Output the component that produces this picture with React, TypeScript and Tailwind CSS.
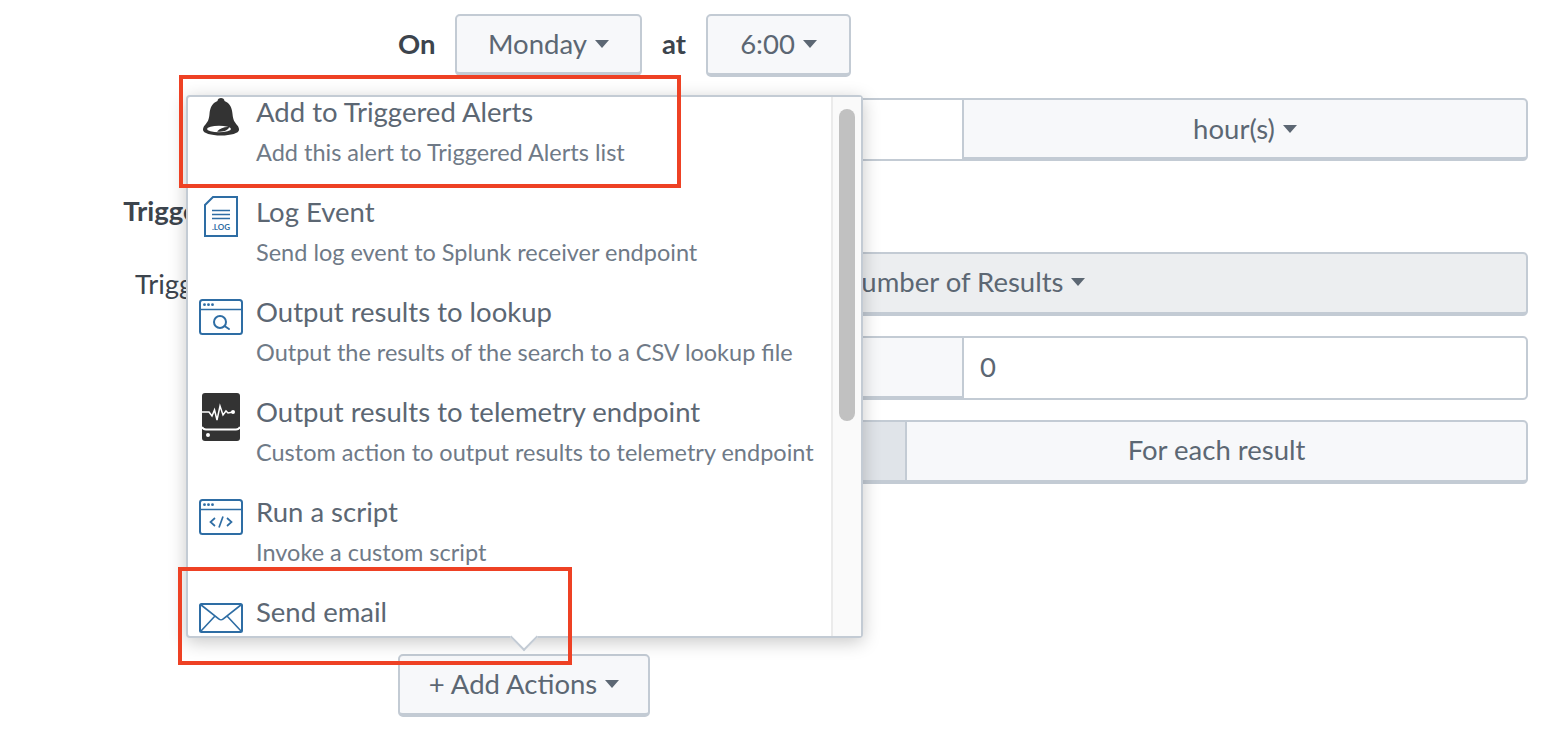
import type { ReactNode } from 'react';

const BLUE = '#2e6da4';
const DARK = '#333333';

function Caret() {
  return <span className="ml-2 inline-block h-0 w-0 border-x-[7px] border-t-[8px] border-x-transparent border-t-[#5c6773] align-[3px]" />;
}

function BellIcon() {
  return (
    <svg width="46" height="50" viewBox="0 0 46 50" className="shrink-0">
      <path d="M19.5 9 C19.5 5 26.5 5 26.5 9 C32 11 34 16 34.5 22 C35 28 36.5 30 39 33 C41 35 41 37 41 38 C41 41 33 43.5 23 43.5 C13 43.5 5 41 5 38 C5 37 5 35 7 33 C9.5 30 11 28 11.5 22 C12 16 14 11 19.5 9 Z" fill={DARK} />
      <ellipse cx="21" cy="37" rx="12" ry="3.2" fill="#ffffff" />
      <path d="M19 39.5 C22 36 27 34.5 31 35 C31 38 25 40.5 19 39.5 Z" fill={DARK} />
    </svg>
  );
}

function LogIcon() {
  return (
    <svg width="46" height="50" viewBox="0 0 46 50" className="shrink-0">
      <path d="M15 5 H39 V44 H7 V13 Z" fill="none" stroke={BLUE} strokeWidth="2" />
      <path d="M14 18.5 H32 M14 22.5 H32 M14 26.5 H32" stroke={BLUE} strokeWidth="1.6" />
      <text x="23" y="38" textAnchor="middle" fontSize="8" fontWeight="700" fill={BLUE} fontFamily="Lato, sans-serif">.LOG</text>
    </svg>
  );
}

function WindowFrame({ children }: { children: ReactNode }) {
  return (
    <svg width="46" height="50" viewBox="0 0 46 50" className="shrink-0">
      <rect x="2" y="8" width="42" height="34" rx="2.5" fill="none" stroke={BLUE} strokeWidth="2" />
      <path d="M2 17.5 H44" stroke={BLUE} strokeWidth="1.5" />
      <circle cx="6.5" cy="12.7" r="1.4" fill={BLUE} />
      <circle cx="10.5" cy="12.7" r="1.4" fill={BLUE} />
      <circle cx="14.5" cy="12.7" r="1.4" fill={BLUE} />
      {children}
    </svg>
  );
}

function TelemetryIcon() {
  return (
    <svg width="46" height="50" viewBox="0 0 46 50" className="shrink-0">
      <rect x="4" y="1" width="38" height="48" rx="3" fill={DARK} />
      <path d="M4 20 H11 L14 24 L16.5 18 L19 28 L22 14 L25 23 L28 19 L30 21 L35 20" fill="none" stroke="#ffffff" strokeWidth="1.5" />
      <circle cx="35" cy="20" r="2" fill="#ffffff" />
      <path d="M4 35 C5 37 6 37.5 8 37.5 H38 C40 37.5 41 37 42 35" fill="none" stroke="#ffffff" strokeWidth="2" />
      <circle cx="10" cy="43" r="2" fill="#ffffff" />
    </svg>
  );
}

function EmailIcon() {
  return (
    <svg width="46" height="50" viewBox="0 0 46 50" className="shrink-0">
      <rect x="2" y="12" width="42" height="28" rx="1.5" fill="none" stroke={BLUE} strokeWidth="2" />
      <path d="M2.5 12.5 L21 27 C22 28 24 28 25 27 L43.5 12.5 M3 39 L17 24 M43 39 L29 24" fill="none" stroke={BLUE} strokeWidth="1.6" />
    </svg>
  );
}

const actions = [
  { icon: <BellIcon />, title: 'Add to Triggered Alerts', desc: 'Add this alert to Triggered Alerts list' },
  { icon: <LogIcon />, title: 'Log Event', desc: 'Send log event to Splunk receiver endpoint' },
  {
    icon: (
      <WindowFrame>
        <circle cx="22" cy="30" r="6" fill="none" stroke={BLUE} strokeWidth="2" />
        <path d="M26.5 34 L31 37" stroke={BLUE} strokeWidth="2" strokeLinecap="round" />
      </WindowFrame>
    ),
    title: 'Output results to lookup',
    desc: 'Output the results of the search to a CSV lookup file',
  },
  { icon: <TelemetryIcon />, title: 'Output results to telemetry endpoint', desc: 'Custom action to output results to telemetry endpoint' },
  {
    icon: (
      <WindowFrame>
        <path d="M17 26 L12.5 30 L17 34 M29 26 L33.5 30 L29 34 M25 24.5 L21 35.5" fill="none" stroke={BLUE} strokeWidth="1.7" />
      </WindowFrame>
    ),
    title: 'Run a script',
    desc: 'Invoke a custom script',
  },
  { icon: <EmailIcon />, title: 'Send email', desc: '' },
];

function Label({ children, className = '' }: { children?: ReactNode; className?: string }) {
  return <div className={`w-[376px] shrink-0 text-right text-[#3c444d] ${className}`}>{children}</div>;
}

const btn = 'flex items-center justify-center border-2 border-b-[4px] border-[#c3cbd4] bg-[#f7f8fa] text-[#5c6773]';

export default function App() {
  return (
    <div className="relative h-[747px] overflow-hidden bg-white text-[27.5px] leading-[40px] font-['Lato',sans-serif]">
      <div className="flex flex-col pt-[14px]">
        <div className="flex items-center gap-[22px]">
          <Label />
          <div className="flex items-center gap-[20px]">
            <span className="w-[37px] pb-[4px] font-bold text-[#3c444d]">On</span>
            <div className={`${btn} h-[62px] w-[187px] self-start rounded-[5px]`}>Monday<Caret /></div>
            <span className="w-[24px] pb-[4px] font-bold text-[#3c444d]">at</span>
            <div className={`${btn} h-[63px] w-[145px] rounded-[5px] pb-[1px]`}>6:00<Caret /></div>
          </div>
        </div>

        <div className="mt-[21px] flex items-center gap-[22px]">
          <Label />
          <div className="flex h-[63px] w-[1130px]">
            <div className="w-[564px] rounded-l-[5px] border-2 border-r-0 border-[#c3cbd4] bg-white" />
            <div className={`${btn} flex-1 rounded-r-[5px]`}>hour(s)<Caret /></div>
          </div>
        </div>

        <div className="mt-[30px] flex items-center gap-[22px]">
          <Label className="pr-[29px] font-bold">Trigger Conditions</Label>
        </div>

        <div className="mt-[21px] flex items-center gap-[22px]">
          <Label className="pr-[24px]">Trigger alert when</Label>
          <div className={`${btn} h-[64px] w-[1130px] rounded-[5px] pb-[2px] !bg-[#eceef0]`}>Number of Results<Caret /></div>
        </div>

        <div className="mt-[20px] flex items-center gap-[22px]">
          <Label />
          <div className="flex h-[64px] w-[1130px]">
            <div className={`${btn} w-[564px] rounded-l-[5px] border-r-0`} />
            <div className="flex flex-1 items-center rounded-r-[5px] border-2 border-[#c3cbd4] bg-white px-4 pb-[2px] text-[#5c6773]">0</div>
          </div>
        </div>

        <div className="mt-[20px] flex items-center gap-[22px]">
          <Label />
          <div className="flex h-[64px] w-[1130px]">
            <div className={`${btn} w-[507px] rounded-l-[5px] border-r-0 !bg-[#e0e4e9]`} />
            <div className={`${btn} flex-1 rounded-r-[5px] pb-[2px]`}>For each result</div>
          </div>
        </div>

        <div className="mt-[108px] flex items-center gap-[22px]">
          <Label className="pr-[4px] font-bold">Trigger Actions</Label>
        </div>

        <div className="mt-[22px] flex items-center gap-[22px]">
          <Label />
          <div className={`${btn} h-[63px] w-[252px] rounded-[5px] pb-[2px]`}>+ Add Actions<Caret /></div>
        </div>
      </div>

      {/* Add Actions popover */}
      <div className="absolute left-[186px] top-[95px] h-[543px] w-[677px] rounded-[4px] border-2 border-[#c3cbd4] bg-white shadow-[0_4px_18px_rgba(0,0,0,0.22)]">
        <div className="flex h-full overflow-hidden">
          <div className="-mt-[5px] flex-1 overflow-hidden pl-[10px]">
            {actions.map((a) => (
              <div key={a.title} className="flex h-[100px] gap-[12px]">
                {a.icon}
                <div className="whitespace-nowrap">
                  <div className="text-[#5c6773]">{a.title}</div>
                  {a.desc && <div className="text-[23.5px] text-[#6f7a87]">{a.desc}</div>}
                </div>
              </div>
            ))}
          </div>
          <div className="w-[30px] shrink-0 border-l-2 border-[#ebebeb] bg-[#fafafa] px-[6px] pt-[12px]">
            <div className="h-[312px] w-[16px] rounded-full bg-[#c1c1c1]" />
          </div>
        </div>
        <div className="absolute left-[326px] top-[530px] h-[20px] w-[20px] rotate-45 border-b-2 border-r-2 border-[#c3cbd4] bg-white" />
      </div>

      {/* Red annotation boxes */}
      <div className="absolute left-[179px] top-[75px] h-[113px] w-[502px] border-[4px] border-[#ee4124]" />
      <div className="absolute left-[178px] top-[567px] h-[98px] w-[394px] border-[4px] border-[#ee4124]" />
    </div>
  );
}
